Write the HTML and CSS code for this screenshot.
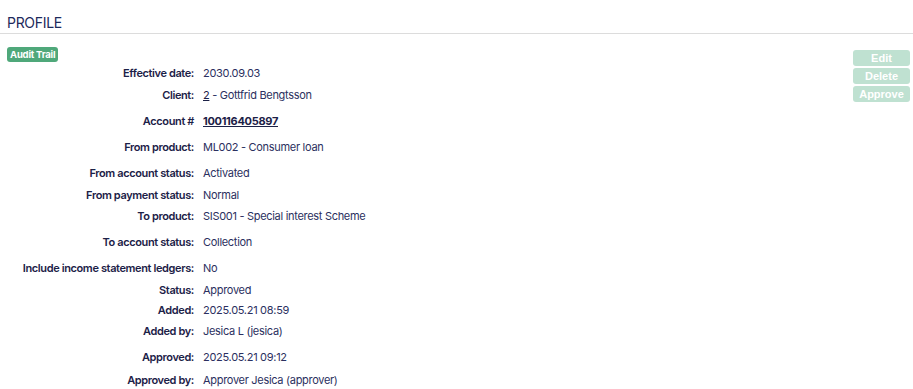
FILE: index.html
```html
<!DOCTYPE html>
<html>
<head>
<meta charset="utf-8">
<link rel="stylesheet" href="styles.css">
</head>
<body>
<div class="page">
  <h1 class="title">PROFILE</h1>
  <div class="content">
    <div class="main">
      <span class="badge">Audit Trail</span>
      <dl class="details">
        <div class="row r22"><dt>Effective date:</dt><dd>2030.09.03</dd></div>
        <div class="row r26"><dt>Client:</dt><dd><a class="link">2</a> - Gottfrid Bengtsson</dd></div>
        <div class="row r26"><dt>Account #</dt><dd><a class="link strong">100116405897</a></dd></div>
        <div class="row r26"><dt>From product:</dt><dd>ML002 - Consumer loan</dd></div>
        <div class="row r22"><dt>From account status:</dt><dd>Activated</dd></div>
        <div class="row r21"><dt>From payment status:</dt><dd>Normal</dd></div>
        <div class="row r26"><dt>To product:</dt><dd>SIS001 - Special interest Scheme</dd></div>
        <div class="row r26"><dt>To account status:</dt><dd>Collection</dd></div>
        <div class="row r22"><dt>Include income statement ledgers:</dt><dd>No</dd></div>
        <div class="row r20"><dt>Status:</dt><dd>Approved</dd></div>
        <div class="row r21"><dt>Added:</dt><dd>2025.05.21 08:59</dd></div>
        <div class="row r26"><dt>Added by:</dt><dd>Jesica L (jesica)</dd></div>
        <div class="row r23"><dt>Approved:</dt><dd>2025.05.21 09:12</dd></div>
        <div class="row r22"><dt>Approved by:</dt><dd>Approver Jesica (approver)</dd></div>
      </dl>
    </div>
    <div class="actions">
      <button class="btn">Edit</button>
      <button class="btn">Delete</button>
      <button class="btn">Approve</button>
    </div>
  </div>
</div>
</body>
</html>
```
FILE: styles.css
```css
* { box-sizing: border-box; }
body {
  margin: 0;
  background: #fff;
  font-family: Inter, "Noto Sans", sans-serif;
  color: #232a52;
}
.page { padding: 0; }
.title {
  margin: 0;
  padding: 14px 0 0 7px;
  height: 34px;
  font-size: 14px;
  font-weight: 400;
  color: #1d2a5c;
  border-bottom: 1px solid #dcdcdc;
  letter-spacing: -0.3px;
}
.content {
  display: flex;
  justify-content: space-between;
  padding: 13px 3px 0 7px;
}
.main { flex: 1; }
.badge {
  display: block;
  width: fit-content;
  background: #4fa87a;
  color: #fff;
  font-size: 9.5px;
  font-weight: 700;
  line-height: 15px;
  height: 15px;
  padding: 0 3px;
  border-radius: 3px;
  letter-spacing: -0.2px;
  margin-bottom: 4px;
}
.details { margin: 0; }
.row {
  display: grid;
  grid-template-columns: 187px 1fr;
  column-gap: 9px;
  font-size: 11px;
  line-height: 14px;
  letter-spacing: -0.3px;
}
.r20 { height: 20px; }
.r21 { height: 21px; }
.r22 { height: 22px; }
.r23 { height: 23px; }
.r26 { height: 26px; }
dt {
  text-align: right;
  font-weight: 600;
  color: #1c2147;
  letter-spacing: -0.38px;
}
dd {
  margin: 0;
  color: #2b3060;
}
.link {
  color: #1c2147;
  text-decoration: underline;
}
.strong { font-weight: 700; }
.actions {
  display: flex;
  flex-direction: column;
  gap: 2px;
  padding-top: 3px;
}
.btn {
  width: 57px;
  height: 16px;
  border: none;
  border-radius: 3px;
  background: #bfe1d1;
  color: #fff;
  font-family: "Liberation Sans", Arial, sans-serif;
  font-size: 11px;
  font-weight: 700;
  padding: 0;
  line-height: 16px;
}
```
